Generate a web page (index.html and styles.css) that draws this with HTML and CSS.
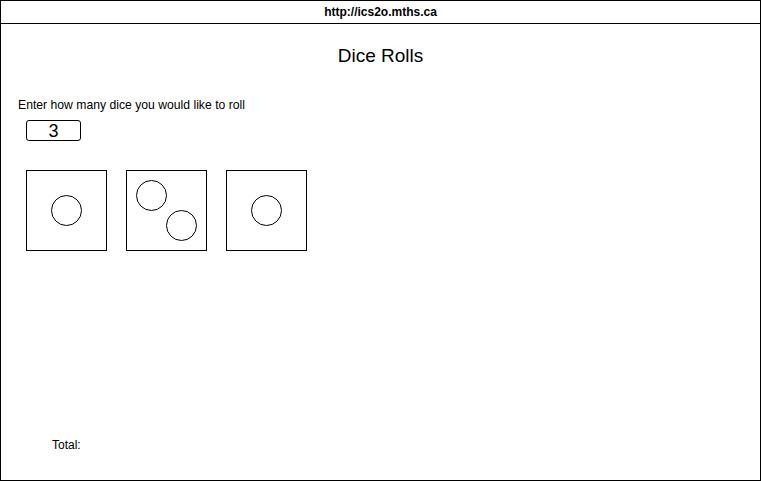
FILE: index.html
```html
<!DOCTYPE html>
<html>
<head>
<meta charset="utf-8">
<link rel="stylesheet" href="styles.css">
</head>
<body>
<div class="frame">
  <div class="urlbar">http://ics2o.mths.ca</div>
  <div class="content">
    <h1 class="title">Dice Rolls</h1>
    <p class="prompt">Enter how many dice you would like to roll</p>
    <div class="count">3</div>
    <div class="dice">
      <div class="die">
        <svg width="79" height="79" viewBox="0 0 79 79"><circle cx="39.5" cy="39.5" r="15" fill="none" stroke="#000" stroke-width="1"/></svg>
      </div>
      <div class="die">
        <svg width="79" height="79" viewBox="0 0 79 79"><circle cx="24.5" cy="24.5" r="15" fill="none" stroke="#000" stroke-width="1"/><circle cx="54.5" cy="54.5" r="15" fill="none" stroke="#000" stroke-width="1"/></svg>
      </div>
      <div class="die">
        <svg width="79" height="79" viewBox="0 0 79 79"><circle cx="39.5" cy="39.5" r="15" fill="none" stroke="#000" stroke-width="1"/></svg>
      </div>
    </div>
    <div class="spacer"></div>
    <p class="total">Total:</p>
  </div>
</div>
</body>
</html>
```
FILE: styles.css
```css
html, body {
  margin: 0;
  padding: 0;
  background: #fff;
}
body {
  font-family: "Liberation Sans", Arial, sans-serif;
  color: #000;
}
.frame {
  width: 761px;
  height: 481px;
  box-sizing: border-box;
  border: 1px solid #000;
  display: flex;
  flex-direction: column;
}
.urlbar {
  height: 22px;
  border-bottom: 1px solid #000;
  display: flex;
  align-items: center;
  justify-content: center;
  font-size: 12px;
  font-weight: bold;
}
.content {
  flex: 1;
  display: flex;
  flex-direction: column;
  padding: 0 0 0 17px;
}
.title {
  margin: 21px 0 0 0;
  font-size: 19px;
  font-weight: normal;
  text-align: center;
  line-height: 22px;
  padding-right: 17px;
}
.prompt {
  margin: 31px 0 0 0;
  font-size: 12.2px;
  line-height: 14px;
}
.count {
  margin: 8px 0 0 8px;
  width: 53px;
  height: 19px;
  border: 1px solid #000;
  border-radius: 3px;
  font-size: 18px;
  line-height: 20px;
  text-align: center;
}
.dice {
  display: flex;
  gap: 19px;
  margin: 29px 0 0 8px;
}
.die {
  width: 79px;
  height: 79px;
  border: 1px solid #000;
}
.die svg {
  display: block;
}
.spacer {
  flex: 1;
}
.total {
  margin: 0 0 28px 34px;
  font-size: 12px;
  line-height: 14px;
}
```
